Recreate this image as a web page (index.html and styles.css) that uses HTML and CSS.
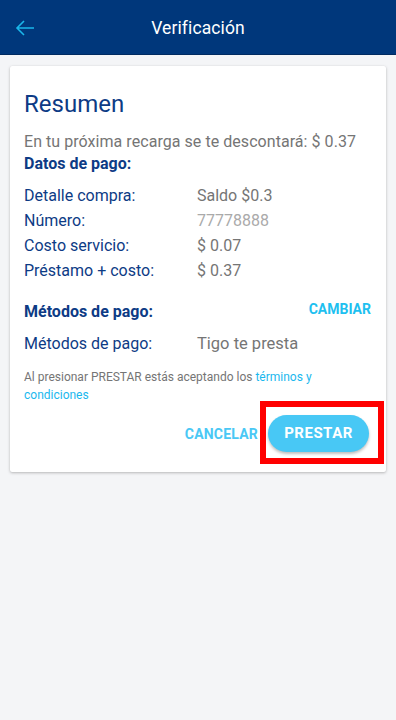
FILE: index.html
```html
<!DOCTYPE html>
<html lang="es">
<head>
<meta charset="utf-8">
<title>Verificación</title>
<link rel="stylesheet" href="styles.css">
</head>
<body>
<header class="topbar">
  <svg class="back" width="22" height="22" viewBox="0 0 22 22"><path d="M20 11H3 M10 4L3 11l7 7" fill="none" stroke="#1ab7ea" stroke-width="1.6"/></svg>
  <h1 class="title">Verificación</h1>
</header>
<main class="content">
  <section class="card">
    <h2 class="heading">Resumen</h2>
    <p class="notice">En tu próxima recarga se te descontará: $ 0.37</p>
    <p class="subhead">Datos de pago:</p>
    <div class="rows">
      <div class="row"><span class="label">Detalle compra:</span><span class="value">Saldo $0.3</span></div>
      <div class="row"><span class="label">Número:</span><span class="value light">77778888</span></div>
      <div class="row"><span class="label">Costo servicio:</span><span class="value">$ 0.07</span></div>
      <div class="row"><span class="label">Préstamo + costo:</span><span class="value">$ 0.37</span></div>
    </div>
    <div class="methods-head">
      <span class="subhead">Métodos de pago:</span>
      <span class="change">CAMBIAR</span>
    </div>
    <div class="row method"><span class="label">Métodos de pago:</span><span class="value">Tigo te presta</span></div>
    <p class="terms">Al presionar PRESTAR estás aceptando los <span class="link">términos y</span><br><span class="link">condiciones</span></p>
    <div class="actions">
      <span class="cancel">CANCELAR</span>
      <span class="primary-wrap">
        <span class="primary">PRESTAR</span>
        <span class="highlight"></span>
      </span>
    </div>
  </section>
</main>
</body>
</html>
```
FILE: styles.css
```css
* { box-sizing: border-box; }
html, body { margin: 0; padding: 0; }
body {
  background: #f4f5f7;
  font-family: Roboto, "Liberation Sans", sans-serif;
  width: 396px;
  height: 720px;
  overflow: hidden;
}
.topbar {
  height: 55px;
  background: #00377b;
  border-bottom: 1px solid #002a60;
  display: flex;
  align-items: center;
  justify-content: center;
  position: relative;
}
.back {
  position: absolute;
  left: 14px;
  top: 17px;
}
.title {
  margin: 2px 0 0;
  color: #ffffff;
  font-size: 17.5px;
  font-weight: 400;
  letter-spacing: 0.1px;
}
.content {
  padding: 11px 10px 0;
}
.card {
  background: #fff;
  border-radius: 2px;
  box-shadow: 0 1px 3px rgba(0,0,0,0.25), 0 0 1px rgba(0,0,0,0.08);
  padding: 24px 15px 20px 14px;
}
.heading {
  margin: 0;
  font-size: 24px;
  line-height: 28px;
  font-weight: 400;
  color: #0d3b85;
}
.notice {
  margin: 13px 0 0;
  font-size: 16px;
  line-height: 22px;
  color: #757575;
  letter-spacing: 0.05px;
}
.subhead {
  margin: 0;
  font-size: 16px;
  line-height: 22px;
  font-weight: 700;
  color: #0d3b85;
}
.rows {
  margin-top: 8px;
}
.row {
  display: flex;
  font-size: 16px;
  line-height: 25px;
}
.label {
  width: 173px;
  color: #0d3b85;
}
.value {
  color: #757575;
}
.value.light {
  color: #aaaaaa;
}
.methods-head {
  margin-top: 16px;
  display: flex;
  justify-content: space-between;
  align-items: flex-start;
}
.methods-head .subhead {
  line-height: 25px;
}
.change {
  font-size: 14px;
  font-weight: 700;
  color: #1ec0f0;
  line-height: 18px;
  margin-top: 1px;
}
.method {
  margin-top: 7px;
}
.method .value {
  font-size: 16.5px;
}
.terms {
  margin: 12px 0 0;
  font-size: 12px;
  line-height: 18px;
  color: #757575;
}
.link {
  color: #1ab8ee;
}
.actions {
  margin-top: 11px;
  display: flex;
  justify-content: flex-end;
  align-items: center;
  gap: 10px;
  padding-right: 2px;
}
.cancel {
  font-size: 14px;
  font-weight: 700;
  color: #4ac8f5;
  letter-spacing: 0.2px;
}
.primary-wrap {
  position: relative;
  display: block;
}
.primary {
  display: block;
  width: 101px;
  height: 37px;
  border-radius: 19px;
  background: #48c8f5;
  color: #fff;
  font-size: 15px;
  font-weight: 700;
  letter-spacing: 0.5px;
  text-align: center;
  line-height: 37px;
  box-shadow: 0 2px 3px rgba(0,0,0,0.25);
}
.highlight {
  position: absolute;
  left: -8px;
  top: -14px;
  width: 124px;
  height: 63px;
  border: 6px solid #ff0000;
}
```
